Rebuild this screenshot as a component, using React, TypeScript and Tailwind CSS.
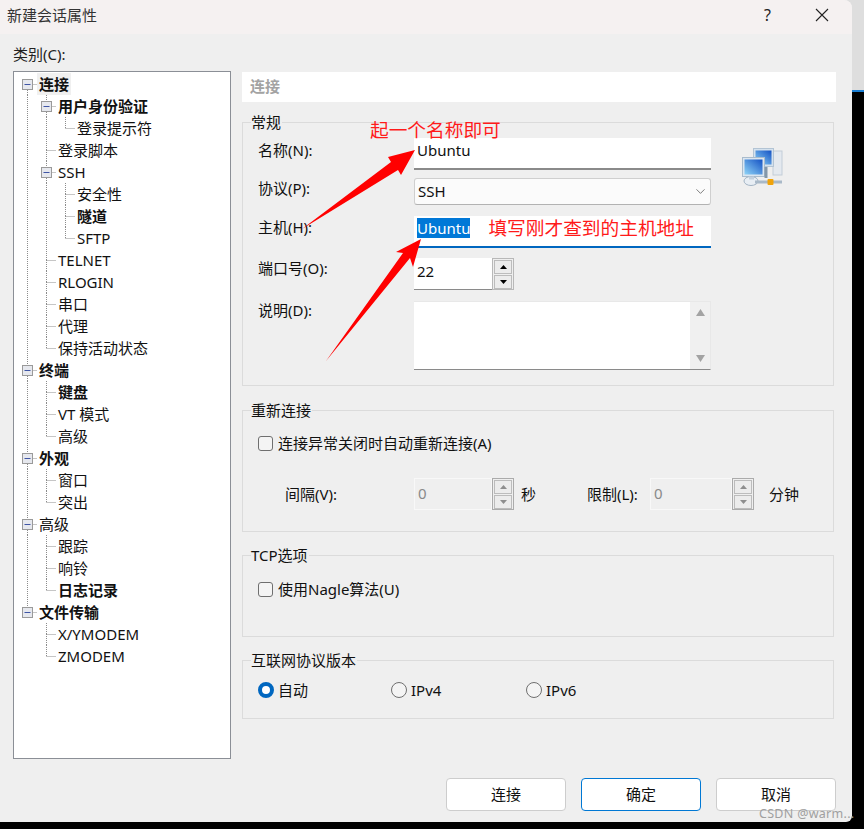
import React from 'react';
import { ChevronDown } from 'lucide-react';

type TreeRow = { t: string; l: number; bold?: boolean; box?: boolean; sel?: boolean };

const TREE: TreeRow[] = [
  { t: '连接', l: 0, bold: true, box: true, sel: true },
  { t: '用户身份验证', l: 1, bold: true, box: true },
  { t: '登录提示符', l: 2 },
  { t: '登录脚本', l: 1 },
  { t: 'SSH', l: 1, box: true },
  { t: '安全性', l: 2 },
  { t: '隧道', l: 2, bold: true },
  { t: 'SFTP', l: 2 },
  { t: 'TELNET', l: 1 },
  { t: 'RLOGIN', l: 1 },
  { t: '串口', l: 1 },
  { t: '代理', l: 1 },
  { t: '保持活动状态', l: 1 },
  { t: '终端', l: 0, bold: true, box: true },
  { t: '键盘', l: 1, bold: true },
  { t: 'VT 模式', l: 1 },
  { t: '高级', l: 1 },
  { t: '外观', l: 0, bold: true, box: true },
  { t: '窗口', l: 1 },
  { t: '突出', l: 1 },
  { t: '高级', l: 0, box: true },
  { t: '跟踪', l: 1 },
  { t: '响铃', l: 1 },
  { t: '日志记录', l: 1, bold: true },
  { t: '文件传输', l: 0, bold: true, box: true },
  { t: 'X/YMODEM', l: 1 },
  { t: 'ZMODEM', l: 1 },
];

const LINE_X = [13.5, 32.5, 51.5];
const DOT = '#8c8c8c';

// is there another item at this depth further down, before the branch closes
const hasNext = (i: number, depth: number) => {
  for (let j = i + 1; j < TREE.length; j++) {
    if (TREE[j].l < depth) return false;
    if (TREE[j].l === depth) return true;
  }
  return false;
};

const Gutter = ({ index, row }: { index: number; row: TreeRow }) => {
  const w = LINE_X[row.l] + 11.5;
  const x = LINE_X[row.l];
  const next = hasNext(index, row.l);
  return (
    <svg width={w} height={22} className="shrink-0">
      {LINE_X.slice(0, row.l).map((lx, d) =>
        hasNext(index, d) ? <line key={d} x1={lx} x2={lx} y1={0} y2={22} stroke={DOT} strokeDasharray="1 1" /> : null,
      )}
      {index > 0 && <line x1={x} x2={x} y1={0} y2={11} stroke={DOT} strokeDasharray="1 1" />}
      {next && <line x1={x} x2={x} y1={11} y2={22} stroke={DOT} strokeDasharray="1 1" />}
      <line x1={x} x2={w - 2} y1={11.5} y2={11.5} stroke={DOT} strokeDasharray="1 1" />
      {row.box && (
        <g>
          <rect x={x - 5} y={6.5} width={10} height={10} fill="#e6e8ee" stroke="#9a9a9a" />
          <line x1={x - 3} x2={x + 3} y1={11.5} y2={11.5} stroke="#3f55a5" />
        </g>
      )}
    </svg>
  );
};

const Group = ({ title, className, children }: { title: string; className: string; children?: React.ReactNode }) => (
  <div className={`relative w-[592px] border border-[#dbdbdb] ${className}`}>
    <span className="absolute left-[8px] top-[-12px] bg-[#efefef] pr-[1px] text-[15px] leading-[22px] text-[#111]">{title}</span>
    {children}
  </div>
);

const Tri = ({ up, color, w = 7, h = 4 }: { up?: boolean; color: string; w?: number; h?: number }) => (
  <svg width={w} height={h} viewBox={`0 0 ${w} ${h}`}>
    <polygon points={up ? `${w / 2},0 ${w},${h} 0,${h}` : `0,0 ${w},0 ${w / 2},${h}`} fill={color} />
  </svg>
);

const SpinBtns = ({ disabled }: { disabled?: boolean }) => (
  <div className={`flex w-[22px] shrink-0 flex-col justify-center gap-[1px] border px-[1px] ${disabled ? 'border-[#ababab]' : 'border-[#b8b8b8]'}`}>
    <div className="flex h-[14px] items-center justify-center border border-[#bcbcbc] bg-[#ececec]">
      <Tri up color={disabled ? '#8e8e8e' : '#000'} />
    </div>
    <div className="flex h-[14px] items-center justify-center border border-[#bcbcbc] bg-[#ececec]">
      <Tri color={disabled ? '#8e8e8e' : '#000'} />
    </div>
  </div>
);

const DisabledSpin = ({ w }: { w: string }) => (
  <div className={`flex h-[32px] shrink-0 ${w}`}>
    <div className="flex-1 border border-[#f8f8f8] pl-[3px] text-[15px] leading-[28px] text-[#8a8a8a]">0</div>
    <SpinBtns disabled />
  </div>
);

const Check = ({ label }: { label: string }) => (
  <div className="flex items-center gap-[5px] text-[15px] leading-[22px] text-[#111]">
    <span className="h-[15px] w-[15px] rounded-[3px] border border-[#6f6f6f] bg-[#f4f4f4]" />
    {label}
  </div>
);

const Radio = ({ label, on, className }: { label: string; on?: boolean; className: string }) => (
  <div className={`flex items-center gap-[4px] text-[15px] leading-[22px] text-[#111] ${className}`}>
    {on ? (
      <span className="h-[16px] w-[16px] rounded-full border-[4px] border-[#0067c0] bg-white" />
    ) : (
      <span className="h-[16px] w-[16px] rounded-full border border-[#6f6f6f] bg-[#f4f4f4]" />
    )}
    {label}
  </div>
);

const FootBtn = ({ label, primary }: { label: string; primary?: boolean }) => (
  <button className={`h-[33px] w-[120px] rounded-[4px] border bg-white text-[15px] text-[#111] ${primary ? 'border-[#0078d4]' : 'border-[#cdcdcd]'}`}>
    {label}
  </button>
);

const NetworkIcon = () => (
  <svg width="41" height="41" viewBox="0 0 41 41" className="ml-[31px] mt-[9px] shrink-0">
    <defs>
      <linearGradient id="scr" x1="1" y1="0" x2="0" y2="1">
        <stop offset="0" stopColor="#1452c4" />
        <stop offset="1" stopColor="#8fd4f7" />
      </linearGradient>
    </defs>
    <rect x="31" y="4" width="9" height="24" fill="#e4e9ef" stroke="#c3cdd8" />
    <rect x="11.5" y="1.5" width="20" height="18" fill="#d5e2ee" stroke="#b3c4d4" />
    <rect x="13.5" y="3.5" width="16" height="14" fill="url(#scr)" />
    <rect x="0.5" y="10.5" width="22" height="19" fill="#dbe6f0" stroke="#a9bccd" />
    <rect x="2.5" y="12.5" width="18" height="15" fill="url(#scr)" />
    <path d="M24 20v11" stroke="#8397a9" strokeWidth="3" />
    <ellipse cx="9" cy="34" rx="7" ry="4.5" fill="#e8eef4" stroke="#a3b4c4" />
    <rect x="7" y="29.5" width="5" height="3" fill="#c4d1de" />
    <path d="M13 35h27" stroke="#a9b9c8" strokeWidth="3" />
    <rect x="25.5" y="32" width="6" height="6" rx="1" fill="#f0a30a" />
  </svg>
);

export default function App() {
  return (
    <div className="relative h-[829px] w-[864px] overflow-hidden bg-[linear-gradient(#dedede_90px,#1a7fd4_90px,#1a7fd4_92px,#000_92px)] font-['Noto_Sans','Noto_Sans_CJK_SC',sans-serif]">
      <div className="h-[822px] w-[852px] rounded-tr-[8px] rounded-br-[6px] bg-[#efefef]">
        {/* title bar */}
        <div className="flex h-[34px] items-center rounded-tr-[8px] bg-[#f5f1f1] pl-[7px] text-[15px] text-[#333]">
          <span className="flex-1 pb-[4px]">新建会话属性</span>
          <span className="mr-[44px] pb-[4px] text-[16px] text-[#222]">?</span>
          <svg width="14" height="14" viewBox="0 0 14 14" className="mb-[4px] mr-[23px]">
            <path d="M1 1l12 12M13 1L1 13" stroke="#222" strokeWidth="1.1" />
          </svg>
        </div>

        <div className="flex pl-[13px]">
          {/* left: category tree */}
          <div className="w-[218px] shrink-0 pt-[10px]">
            <div className="-mt-[1px] mb-[1px] text-[15px] leading-[22px] text-[#222]">类别(C):</div>
            <div className="mt-[6px] h-[688px] border border-[#8b8f96] bg-white pt-[1px]">
              {TREE.map((row, i) => (
                <div key={i} className="flex h-[22px] items-center">
                  <Gutter index={i} row={row} />
                  <span className={`whitespace-nowrap text-[15px] leading-[22px] text-[#111] ${row.bold ? 'font-bold' : ''} ${row.sel ? 'bg-[#f0f0f0] px-[2px] ml-[-2px]' : ''}`}>
                    {row.t}
                  </span>
                </div>
              ))}
            </div>
          </div>

          {/* right: settings */}
          <div className="ml-[11px] w-[594px] pt-[38px]">
            <div className="h-[30px] bg-white pl-[8px] text-[15px] font-bold leading-[28px] text-[#a3a3a3]">连接</div>

            <Group title="常规" className="mt-[20px] h-[264px]">
              <div className="flex pl-[15px] pt-[15px]">
                <div className="w-[453px] text-[15px] text-[#111]">
                  <div className="flex h-[32px]">
                    <span className="w-[156px] pt-[1px] leading-[22px]">名称(N):</span>
                    <div className="flex-1 border-b-2 border-[#8a8a8a] bg-white pl-[3px] leading-[25px]">Ubuntu</div>
                  </div>
                  <div className="mt-[8px] flex h-[27px]">
                    <span className="-mt-[1px] w-[156px] leading-[22px]">协议(P):</span>
                    <div className="flex flex-1 items-center justify-between rounded-[3px] border border-[#cfcfcf] border-b-[#b2b2b2] bg-[#fbfbfb] pl-[3px] pr-[2px]">
                      SSH
                      <ChevronDown size={15} strokeWidth={1} className="text-[#333]" />
                    </div>
                  </div>
                  <div className="mt-[11px] flex h-[32px]">
                    <span className="w-[156px] leading-[22px]">主机(H):</span>
                    <div className="flex flex-1 items-start border-b-2 border-[#0067c0] bg-white pl-[3px] pt-[2px]">
                      <span className="bg-[#0078d7] leading-[20px] text-white">Ubuntu</span>
                      <span className="ml-[18px] text-[18.7px] leading-[20px] text-[#ff1a1a]">填写刚才查到的主机地址</span>
                    </div>
                  </div>
                  <div className="mt-[10px] flex h-[32px]">
                    <span className="-mt-[1px] w-[156px] leading-[22px]">端口号(O):</span>
                    <div className="flex w-[100px]">
                      <div className="flex-1 border-b border-[#8a8a8a] bg-white pl-[3px] leading-[26px]">22</div>
                      <SpinBtns />
                    </div>
                  </div>
                  <div className="mt-[11px] flex h-[69px]">
                    <span className="-mt-[2px] w-[156px] leading-[22px]">说明(D):</span>
                    <div className="flex flex-1 justify-end border-b border-r border-t border-[#e8e8e8] border-b-[#8a8a8a] bg-white">
                      <div className="flex w-[20px] flex-col items-center justify-between bg-[#f0f0f0] py-[7px]">
                        <Tri up color="#a3a3a3" w={9} h={7} />
                        <Tri color="#a3a3a3" w={9} h={7} />
                      </div>
                    </div>
                  </div>
                </div>
                <NetworkIcon />
              </div>
            </Group>

            <Group title="重新连接" className="mt-[24px] h-[122px]">
              <div className="pl-[15px] pt-[21px]">
                <Check label="连接异常关闭时自动重新连接(A)" />
                <div className="mt-[24px] flex items-center text-[15px] text-[#111]">
                  <span className="ml-[27px] w-[129px]">间隔(V):</span>
                  <DisabledSpin w="w-[100px]" />
                  <span className="ml-[7px] w-[66px]">秒</span>
                  <span className="w-[63px]">限制(L):</span>
                  <DisabledSpin w="w-[104px]" />
                  <span className="ml-[15px]">分钟</span>
                </div>
              </div>
            </Group>

            <Group title="TCP选项" className="mt-[23px] h-[82px]">
              <div className="pl-[15px] pt-[22px]">
                <Check label="使用Nagle算法(U)" />
              </div>
            </Group>

            <Group title="互联网协议版本" className="mt-[23px] h-[59px]">
              <div className="flex pl-[15px] pt-[18px]">
                <Radio on label="自动" className="w-[133px]" />
                <Radio label="IPv4" className="w-[135px]" />
                <Radio label="IPv6" className="w-[100px]" />
              </div>
            </Group>

            <div className="mt-[59px] flex justify-end gap-[15px]">
              <FootBtn label="连接" />
              <FootBtn label="确定" primary />
              <FootBtn label="取消" />
            </div>
          </div>
        </div>
      </div>

      {/* red annotations drawn over the dialog */}
      <span className="absolute left-[370px] top-[120px] text-[18.7px] leading-[20px] text-[#ff1a1a]">起一个名称即可</span>
      <svg width="864" height="829" className="pointer-events-none absolute left-0 top-0">
        <polygon points="302,229 391,162 388,157 415,150 401,175 398,170" fill="#ff0000" />
        <polygon points="326,361 403,253 396,252 421,239 413,267 410,258" fill="#ff0000" />
      </svg>
      <span className="absolute left-[759px] top-[806px] text-[12.5px] leading-[16px] tracking-[0.3px] text-[#a0a0a0]">CSDN @warm...</span>
    </div>
  );
}
